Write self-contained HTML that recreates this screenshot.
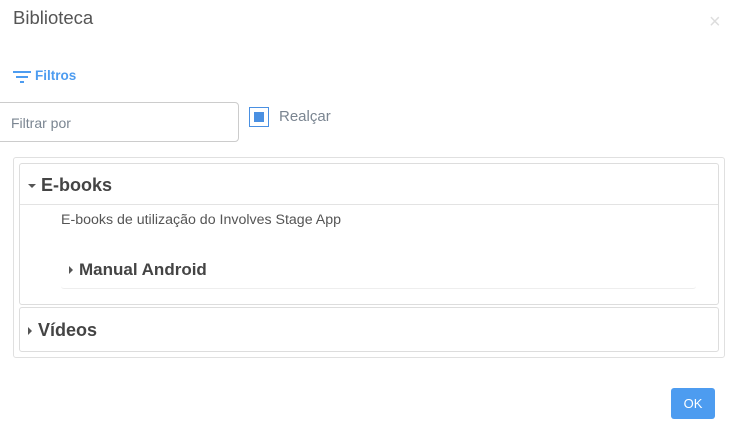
<html><head><style>
body{margin:0;width:736px;height:430px;background:#fff;font-family:"Liberation Sans",sans-serif;position:relative;overflow:hidden}
.a{position:absolute}
</style></head><body>
<div class="a" style="left:13px;top:7px;font-size:18.5px;color:#555">Biblioteca</div>
<div class="a" style="left:709px;top:12px;font-size:20px;color:#ddd;line-height:20px">×</div>
<svg class="a" style="left:13px;top:70px" width="20" height="14"><rect x="0" y="1" width="18" height="2" fill="#4d9cf0"/><rect x="3" y="6" width="12" height="2" fill="#4d9cf0"/><rect x="7" y="11" width="4" height="2" fill="#4d9cf0"/></svg>
<div class="a" style="left:35px;top:68px;font-size:13.5px;font-weight:bold;color:#4d9cf0">Filtros</div>
<div class="a" style="left:-4px;top:102px;width:241px;height:38px;border:1px solid #ccc;border-radius:4px"></div>
<div class="a" style="left:11px;top:115px;font-size:14px;color:#7a8591">Filtrar por</div>
<div class="a" style="left:249px;top:107px;width:20px;height:20px;border:1px solid #4a90e2;box-sizing:border-box"></div>
<div class="a" style="left:254px;top:112px;width:10px;height:10px;background:#4a90e2"></div>
<div class="a" style="left:279px;top:108px;font-size:15px;color:#7a8591">Realçar</div>
<div class="a" style="left:13px;top:157px;width:710px;height:199px;border:1px solid #e0e0e0;border-radius:3px"></div>
<div class="a" style="left:19px;top:163px;width:698px;height:140px;border:1px solid #ddd;border-radius:3px"></div>
<div class="a" style="left:20px;top:204px;width:698px;height:1px;background:#e3e3e3"></div>
<div class="a" style="left:28px;top:184px;width:0;height:0;border-left:4px solid transparent;border-right:4px solid transparent;border-top:4px solid #555"></div>
<div class="a" style="left:41px;top:175px;font-size:18px;font-weight:bold;color:#444">E-books</div>
<div class="a" style="left:61px;top:212px;font-size:14.2px;color:#555">E-books de utilização do Involves Stage App</div>
<div class="a" style="left:61px;top:253px;width:635px;height:35px;border-bottom:1px solid #eee;border-radius:3px"></div>
<div class="a" style="left:69px;top:266px;width:0;height:0;border-top:4px solid transparent;border-bottom:4px solid transparent;border-left:4px solid #555"></div>
<div class="a" style="left:79px;top:260px;font-size:17px;font-weight:bold;color:#444">Manual Android</div>
<div class="a" style="left:19px;top:307px;width:698px;height:43px;border:1px solid #ddd;border-radius:3px;background:#fff"></div>
<div class="a" style="left:28px;top:327px;width:0;height:0;border-top:4px solid transparent;border-bottom:4px solid transparent;border-left:4px solid #555"></div>
<div class="a" style="left:38px;top:320px;font-size:18px;font-weight:bold;color:#444">Vídeos</div>
<div class="a" style="left:671px;top:388px;width:44px;height:31px;background:#4d9cf0;border-radius:3px;color:#fff;font-size:13px;text-align:center;line-height:31px">OK</div>
</body></html>
